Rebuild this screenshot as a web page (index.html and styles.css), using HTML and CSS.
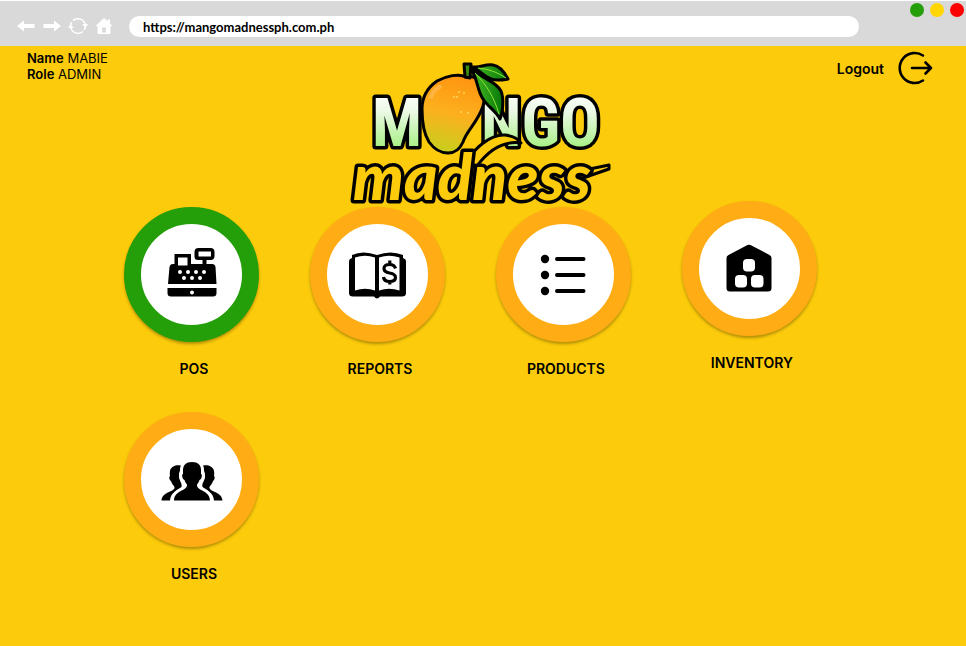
FILE: index.html
```html
<!DOCTYPE html>
<html lang="en">
<head>
<meta charset="utf-8">
<title>Mango Madness</title>
<link rel="stylesheet" href="styles.css">
</head>
<body>
<div class="browser-bar">
  <nav class="browser-nav" aria-label="Browser">
    <button class="nav-button" type="button" aria-label="Back">
      <svg width="18" height="18" viewBox="0 0 18 18"><path fill="#fff" d="M0 9 L7 3.5 V7 H17.500 V11 H7 V14.500 Z"/></svg>
    </button>
    <button class="nav-button" type="button" aria-label="Forward">
      <svg width="18" height="18" viewBox="0 0 18 18"><path fill="#fff" d="M18 9 L11 3.500 V7 H.5 V11 H11 V14.500 Z"/></svg>
    </button>
    <button class="nav-button" type="button" aria-label="Reload">
      <svg width="18" height="18" viewBox="1 0 18 18"><g fill="none" stroke="#fff" stroke-width="1.400"><path d="M5 3.600 A7.500 7.500 0 0 1 17.300 8"/><path d="M15 14.500 A7.500 7.500 0 0 1 2.700 10"/><path d="M2.700 8 A7.500 7.500 0 0 1 5 3.600 M17.300 10 A7.500 7.500 0 0 1 15 14.500" stroke-dasharray="3 2"/></g><path fill="#fff" d="M14.200 7 H20 L17.300 11 Z M0 11 L2.700 7 L5.800 11 Z"/></svg>
    </button>
    <button class="nav-button" type="button" aria-label="Home">
      <svg width="18" height="18" viewBox="0 0 18 18"><path fill="#fff" fill-rule="evenodd" d="M9 1 L12.500 4.300 V2.500 H15 V6.500 L17.500 9 H15.500 V17 H2.500 V9 H.5 Z M7.200 10.500 V15.500 H10.800 V10.500 Z"/></svg>
    </button>
  </nav>
  <input class="address" type="text" aria-label="Address" value="https://mangomadnessph.com.ph">
  <div class="window-dots">
    <span class="dot dot-green"></span>
    <span class="dot dot-yellow"></span>
    <span class="dot dot-red"></span>
  </div>
</div>

<header class="header">
  <p class="user"><strong>Name</strong> MABIE<br><strong>Role</strong> ADMIN</p>
  <svg class="logo" viewBox="345 60 270 148" role="img" aria-label="Mango Madness">
    <defs>
      <linearGradient id="letters" gradientUnits="userSpaceOnUse" x1="0" y1="90" x2="0" y2="148">
        <stop offset="0" stop-color="#fff"/><stop offset=".35" stop-color="#edf9e8"/><stop offset="1" stop-color="#a6f083"/>
      </linearGradient>
      <linearGradient id="fruit" x1=".6" y1="0" x2=".4" y2="1">
        <stop offset="0" stop-color="#ff9410"/><stop offset=".5" stop-color="#fcb01e"/><stop offset="1" stop-color="#c7cf1c"/>
      </linearGradient>
      <linearGradient id="leaf" x1="0" y1="0" x2="1" y2="0">
        <stop offset="0" stop-color="#49bd22"/><stop offset="1" stop-color="#08780a"/>
      </linearGradient>
    </defs>
    <g class="logo-caps">
      <text x="372" y="146">M</text>
      <text x="481" y="146">NGO</text>
    </g>
    <g stroke="#000" stroke-width="3" stroke-linejoin="round">
      <path fill="url(#fruit)" d="M466 77 C459 73 446 76 437 81 C427 88 422 98 422 109 C422 121 424 134 429 142 C434 149 440 153 448 153 C455 153 460 149 463 142 C467 130 478 122 483 106 C486 95 484 84 477 79 C473 76 469 76 466 77 Z"/>
      <path fill="#3b8c12" d="M464 64 L471 64 L470 78 L465 77 Z"/>
      <path fill="url(#leaf)" d="M471 67 C480 69 482 76 491 79 C497 81 502 80 508 79 C505 73 500 66 493 65 C486 64 481 67 476 67 Z"/>
      <path fill="url(#leaf)" d="M471 70 C477 75 477 91 483 99 C488 107 496 111 500 119 C503 112 504 98 501 91 C496 81 482 79 473 69 Z"/>
    </g>
    <path fill="none" stroke="#8ee338" stroke-width="1" d="M475 73 C486 84 494 97 499 114 M478 68 C488 69 497 72 506 78"/>
    <path fill="none" stroke="#ffc05c" stroke-width="4" stroke-linecap="round" opacity=".6" d="M431 97 C433 92 437 88 440 87"/>
    <g fill="#ffd55c"><circle cx="454" cy="97" r="1"/><circle cx="459" cy="92" r="1"/><circle cx="464" cy="93" r="1"/><circle cx="457" cy="97" r="1"/><circle cx="461" cy="112" r="1"/><circle cx="468" cy="113" r="1"/></g>
    <g fill="#fccb0b" stroke="#000" stroke-width="3" stroke-linejoin="round">
      <path d="M466 162 C474 149 490 134 505 135 C514 136 519 140 521 143 C507 141 491 147 477 166 Z"/>
      <path d="M580 171 L609 165 V169 L580 179 Z"/>
    </g>
    <text class="logo-script" x="353" y="200">madness</text>
  </svg>
  <button class="logout" type="button">
    <span>Logout</span>
    <svg width="36" height="36" viewBox="0 0 36 36" fill="none" stroke="#000" stroke-width="2.600" stroke-linecap="round" stroke-linejoin="round"><path d="M26 5.500 A15 15 0 1 0 26 30.500 M15 18 H34 M28.500 12.500 L34 18 L28.500 23.500"/></svg>
  </button>
</header>

<main class="menu">
  <button class="tile" type="button">
    <span class="ring ring-active">
      <svg width="60" height="60" viewBox="0 0 60 60"><path fill-rule="evenodd" d="M12.500 9 H29 V19 H40.500 V15 H36 Q32.500 15 32.500 11.500 V7 Q32.500 3 36.500 3 H48.500 Q52.500 3 52.500 7 V11 Q52.500 15 48.500 15 H44.500 V19 H50 Q53 19 53.500 22 L54.500 39 H6 L7.500 22 Q8 19 11 19 H12.500 Z M16 12.500 V20.500 H25.500 V12.500 Z M36.500 6.500 V11.500 H49 V6.500 Z"/><path d="M5.500 43 H54.500 V48 Q54.500 51.500 51 51.500 H9 Q5.500 51.500 5.500 48 Z"/><g fill="#fff"><circle cx="18" cy="27" r="2"/><circle cx="26" cy="27" r="2"/><circle cx="34" cy="27" r="2"/><circle cx="42" cy="27" r="2"/><circle cx="22" cy="33" r="2"/><circle cx="30" cy="33" r="2"/><circle cx="38" cy="33" r="2"/><circle cx="30" cy="47.500" r="2"/></g></svg>
    </span>
    <span class="tile-label">POS</span>
  </button>
  <button class="tile" type="button">
    <span class="ring">
      <svg width="60" height="60" viewBox="2 0 60 60"><path d="M4 16 Q4 14 7 13 V10 Q18 5 32 10 Q46 5 58 10 V13 Q61 14 61 16 V48 Q61 51.500 57 51.500 H35 Q32 55.500 29 51.500 H8 Q4 51.500 4 48 Z"/><path fill="#fff" d="M10 12.500 Q20 9 30 12.500 V45.500 Q20 42 10 45.500 Z M34 12.500 Q44 9 54.500 12.500 V45.500 Q44 42 34 45.500 Z"/><path fill="none" stroke="#000" stroke-width="3.200" d="M50.500 23.500 Q49.500 19.500 44.500 19.500 Q39 19.500 39 23.500 Q39 27 44.500 28 Q50.500 29 50.500 32.500 Q50.500 36.500 44.500 36.500 Q39 36.500 38.500 32 M44.800 15.500 V20 M44.800 36 V39.500"/></svg>
    </span>
    <span class="tile-label">REPORTS</span>
  </button>
  <button class="tile" type="button">
    <span class="ring">
      <svg width="60" height="60" viewBox="0 0 60 60"><g><circle cx="12" cy="14" r="4.200"/><circle cx="12" cy="30" r="4.200"/><circle cx="12" cy="46" r="4.200"/></g><path stroke="#000" stroke-width="4" stroke-linecap="round" d="M24 14 H50.500 M24 30 H50.500 M24 46 H50.500"/></svg>
    </span>
    <span class="tile-label">PRODUCTS</span>
  </button>
  <button class="tile tile-raised" type="button">
    <span class="ring">
      <svg width="60" height="60" viewBox="0 0 60 60"><path d="M28.500 6 Q30 5.300 31.500 6 L50.500 16 Q52.500 17 52.500 19 V49 Q52.500 52.500 49 52.500 H11 Q7.500 52.500 7.500 49 V19 Q7.500 17 9.500 16 Z"/><g fill="#fff"><rect x="24" y="20" width="12" height="12.500" rx="4"/><rect x="16" y="36" width="12" height="12.500" rx="4"/><rect x="32" y="36" width="12.500" height="12.500" rx="4"/></g></svg>
    </span>
    <span class="tile-label">INVENTORY</span>
  </button>
  <button class="tile" type="button">
    <span class="ring">
      <svg width="64" height="60" viewBox="0 0 64 60"><path d="M24 17 C20 14 11 15 10 21 C9.500 24 10 25 10 26 C9 26 9 30 11 31 C12 35 15 36 14.500 38 C13.500 42 2 42 1.500 50.500 H10 C10.500 42 18 41 21.500 37 C22.500 33 19 31 19 26 C19 21 20.500 19 24 17 Z"/><path transform="translate(64 0) scale(-1 1)" d="M24 17 C20 14 11 15 10 21 C9.500 24 10 25 10 26 C9 26 9 30 11 31 C12 35 15 36 14.500 38 C13.500 42 2 42 1.500 50.500 H10 C10.500 42 18 41 21.500 37 C22.500 33 19 31 19 26 C19 21 20.500 19 24 17 Z"/><path stroke="#fff" stroke-width="6" paint-order="stroke" d="M32 12 C26 12 23 15 23 20 V24 C21.500 24 22 29 24.500 30 C25 32 26 33 27 34.500 C28 41 14 40 14 50.500 H50 C50 40 36 41 37 34.500 C38 33 39 32 39.500 30 C42 29 42.500 24 41 24 V20 C41 15 38 12 32 12 Z"/></svg>
    </span>
    <span class="tile-label">USERS</span>
  </button>
</main>
</body>
</html>
```

FILE: styles.css
```css
* {
  box-sizing: border-box;
}

body {
  margin: 0;
  min-height: 100vh;
  background: #fccb0b;
  color: #000;
  font-family: Inter, "Liberation Sans", sans-serif;
  font-size: 14px;
}

button {
  padding: 0;
  border: 0;
  background: none;
  color: inherit;
  font: inherit;
  cursor: pointer;
}

.browser-bar {
  display: flex;
  align-items: flex-start;
  height: 46px;
  border-top: 1px solid #fff;
  background: #d9d9d9;
}

.browser-nav {
  display: flex;
  gap: 8px;
  width: 129px;
  padding: 16px 0 0 17px;
}

.nav-button svg {
  display: block;
  overflow: visible;
}

.address {
  flex: 1;
  height: 21px;
  margin-top: 15px;
  padding: 0 14px;
  border: 0;
  border-radius: 11px;
  background: #fff;
  color: #000;
  font-family: Lato, "Liberation Sans", sans-serif;
  font-size: 13px;
  font-weight: 700;
}

.window-dots {
  display: flex;
  justify-content: flex-end;
  gap: 6px;
  width: 107px;
  padding: 2px 2px 0 0;
}

.dot {
  width: 14px;
  height: 14px;
  border-radius: 50%;
}

.dot-green {
  background: #249e09;
}

.dot-yellow {
  background: #ffd600;
}

.dot-red {
  background: #f00;
}

.header {
  display: grid;
  grid-template-columns: 1fr 270px 1fr;
  align-items: start;
  padding: 4px 33px 0 27px;
}

.user {
  margin: 0;
  font-size: 13px;
  line-height: 16px;
}

.user strong {
  font-weight: 600;
}

.logo {
  display: block;
  width: 270px;
  height: 148px;
  margin-top: 10px;
  overflow: visible;
}

.logo-caps {
  fill: url(#letters);
  stroke: #000;
  stroke-width: 7px;
  stroke-linejoin: round;
  paint-order: stroke;
  font-family: "Roboto Condensed", "Liberation Sans Narrow", Roboto, sans-serif;
  font-size: 66px;
  font-weight: 700;
}

.logo-script {
  fill: #fccb0b;
  stroke: #000;
  stroke-width: 7px;
  stroke-linejoin: round;
  paint-order: stroke;
  font-family: Lato, sans-serif;
  font-size: 64px;
  font-style: italic;
  font-weight: 900;
}

.logout {
  display: flex;
  justify-self: end;
  align-items: center;
  gap: 13px;
  font-weight: 600;
}

.logout svg {
  display: block;
}

.menu {
  display: grid;
  grid-template-columns: repeat(4, 1fr);
  row-gap: 33px;
  align-items: start;
  margin: -1px 12.8% 0 10.2%;
}

.tile {
  display: flex;
  flex-direction: column;
  align-items: center;
  gap: 17px;
}

.tile-raised {
  margin-top: -6px;
}

.ring {
  display: flex;
  align-items: center;
  justify-content: center;
  width: 135px;
  height: 135px;
  border: 17px solid #ffac15;
  border-radius: 50%;
  background: #fff;
  box-shadow: 0 2px 3px rgba(0, 0, 0, 0.3);
}

.ring-active {
  border-color: #249e09;
}

.tile-label {
  padding-left: 5px;
  line-height: 20px;
  font-weight: 600;
}
```
